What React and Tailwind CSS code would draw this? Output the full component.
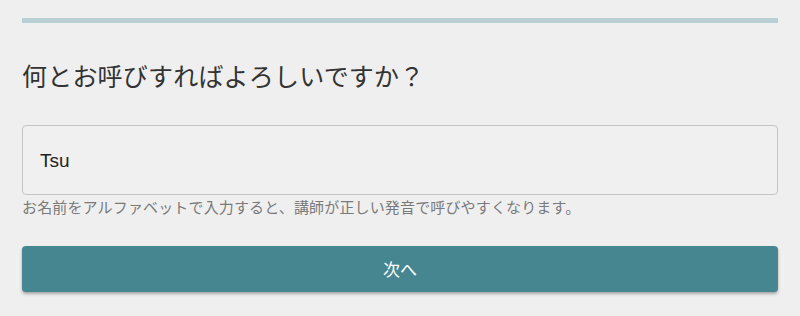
export default function App() {
  return (
    <div className="w-[800px] h-[316px] bg-[#efefef] px-[22px] pt-[18px] font-['Noto_Sans_CJK_JP',sans-serif]">
      <div className="h-[5px] bg-[#b8cfd3]" />
      <h1 className="mt-[34px] text-[25px] leading-[36px] text-[#333333] font-normal tracking-[0.2px]">
        何とお呼びすればよろしいですか？
      </h1>
      <div className="mt-[32px] h-[70px] rounded-[4px] border border-[#c4c4c4] bg-[#f0f0f0] flex items-center px-[17px] pt-[2px]">
        <span className="text-[19px] text-[#222222] font-['Liberation_Sans','Noto_Sans_CJK_JP',sans-serif]">Tsu</span>
      </div>
      <p className="mt-[1px] text-[15px] leading-[22px] text-[#7a7a7a] tracking-[0.15px]">
        お名前をアルファベットで入力すると、講師が正しい発音で呼びやすくなります。
      </p>
      <button className="mt-[28px] w-full h-[46px] rounded-[4px] bg-[#458690] text-white text-[17px] shadow-[0_2px_3px_rgba(0,0,0,0.3)] flex items-center justify-center">
        次へ
      </button>
    </div>
  );
}
